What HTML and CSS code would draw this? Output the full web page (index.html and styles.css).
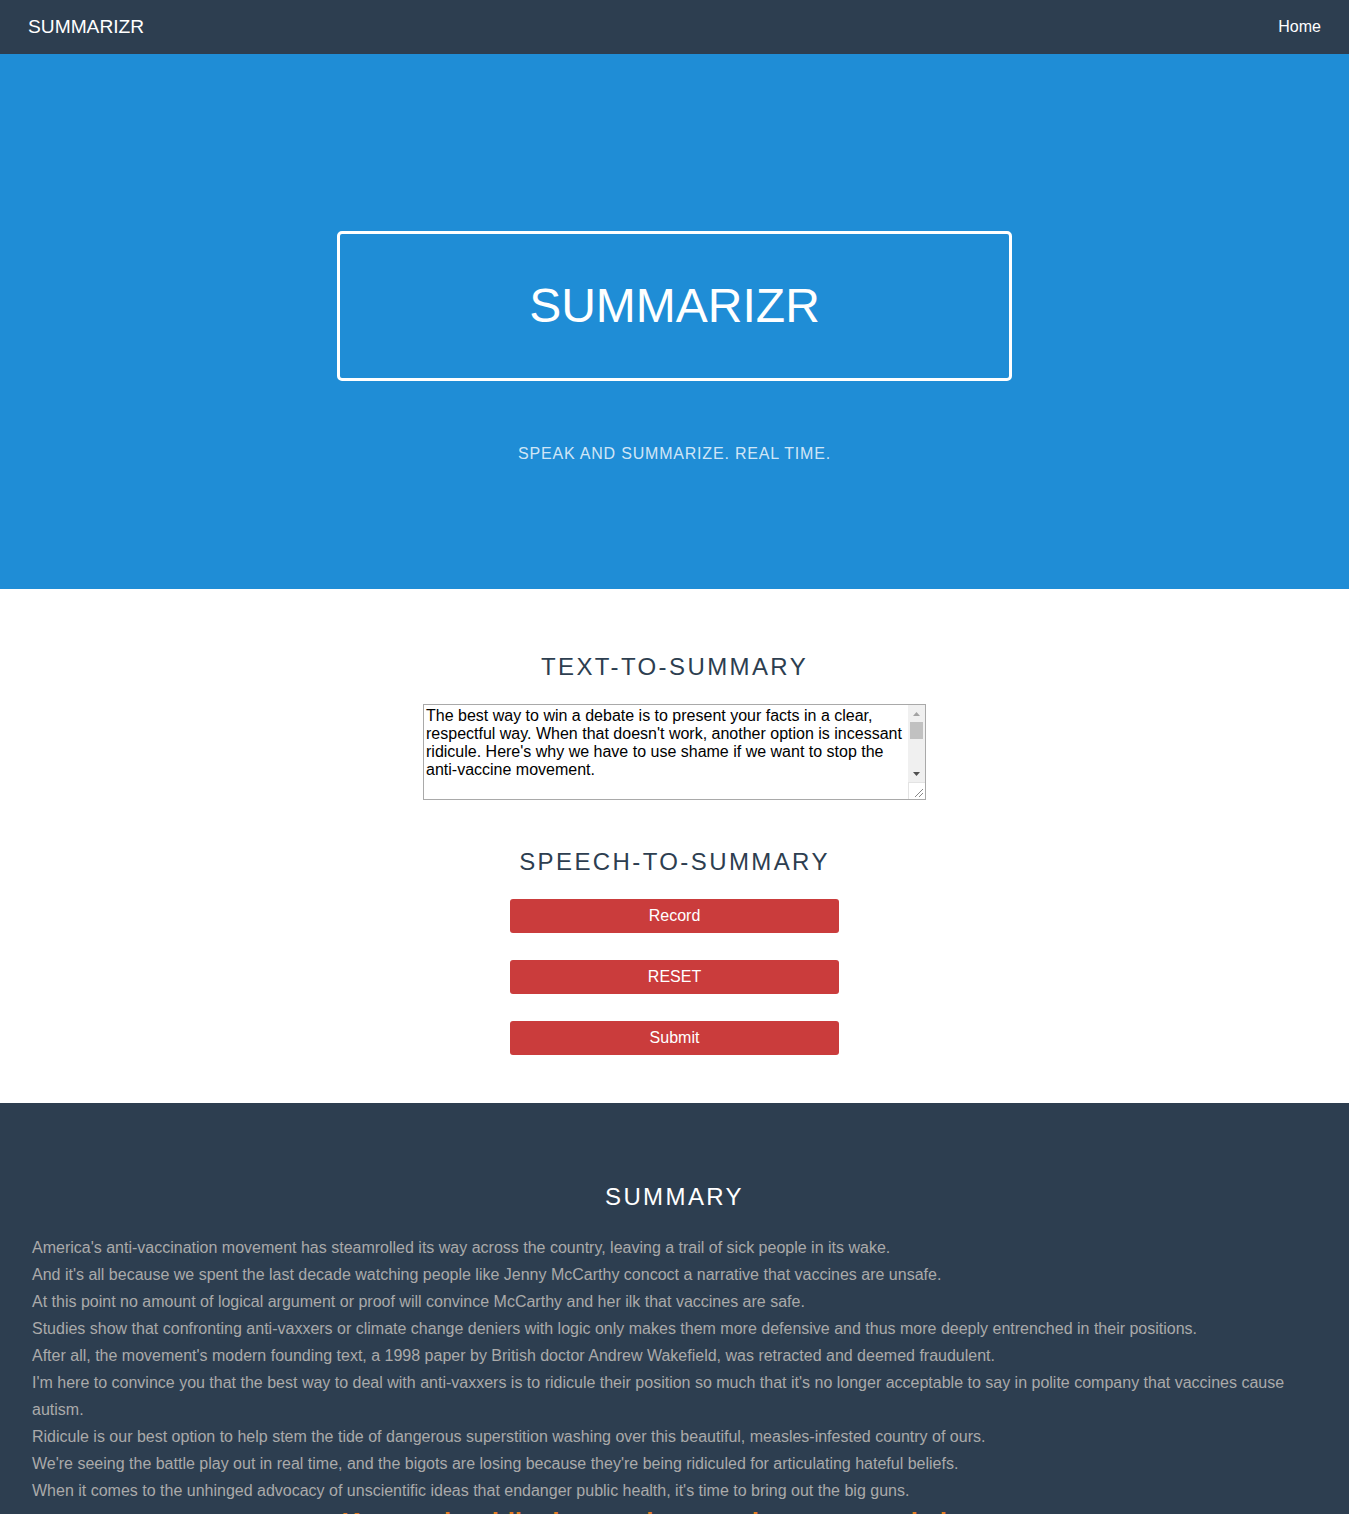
FILE: index.html
```html
<!DOCTYPE html>
<html lang="en">
<head>
<meta charset="utf-8">
<title>Summarizr</title>
<link rel="stylesheet" href="styles.css">
</head>
<body>
<header class="nav">
  <a class="brand" href="#">SUMMARIZR</a>
  <nav class="menu"><a href="#">Home</a></nav>
</header>

<section class="hero">
  <h1 class="splash-head">SUMMARIZR</h1>
  <p class="splash-sub">SPEAK AND SUMMARIZE. REAL TIME.</p>
</section>

<section class="tools">
  <h2 class="content-head">Text-to-Summary</h2>
  <div class="ta-wrap">
    <textarea class="ta">The best way to win a debate is to present your facts in a clear, respectful way. When that doesn't work, another option is incessant ridicule. Here's why we have to use shame if we want to stop the anti-vaccine movement.</textarea>
    <div class="vscroll" aria-hidden="true">
      <span class="sb-btn"><svg width="7" height="4" viewBox="0 0 7 4"><path d="M0 4L3.5 0L7 4Z" fill="#a3a3a3"/></svg></span>
      <span class="sb-track"><span class="sb-thumb"></span></span>
      <span class="sb-btn"><svg width="7" height="4" viewBox="0 0 7 4"><path d="M0 0L3.5 4L7 0Z" fill="#505050"/></svg></span>
    </div>
    <div class="sb-corner" aria-hidden="true">
      <svg width="16" height="16" viewBox="0 0 16 16"><path d="M6 14L14 6M10 14L14 10" stroke="#888" stroke-width="1"/></svg>
    </div>
  </div>
  <h2 class="content-head second">Speech-to-Summary</h2>
  <div class="buttons">
    <button class="btn" type="button">Record</button>
    <button class="btn" type="button">RESET</button>
    <button class="btn" type="button">Submit</button>
  </div>
</section>

<section class="ribbon">
  <h2 class="content-head light">Summary</h2>
  <div class="summary">
    <p>America's anti-vaccination movement has steamrolled its way across the country, leaving a trail of sick people in its wake.</p>
    <p>And it's all because we spent the last decade watching people like Jenny McCarthy concoct a narrative that vaccines are unsafe.</p>
    <p>At this point no amount of logical argument or proof will convince McCarthy and her ilk that vaccines are safe.</p>
    <p>Studies show that confronting anti-vaxxers or climate change deniers with logic only makes them more defensive and thus more deeply entrenched in their positions.</p>
    <p>After all, the movement's modern founding text, a 1998 paper by British doctor Andrew Wakefield, was retracted and deemed fraudulent.</p>
    <p>I'm here to convince you that the best way to deal with anti-vaxxers is to ridicule their position so much that it's no longer acceptable to say in polite company that vaccines cause autism.</p>
    <p>Ridicule is our best option to help stem the tide of dangerous superstition washing over this beautiful, measles-infested country of ours.</p>
    <p>We're seeing the battle play out in real time, and the bigots are losing because they're being ridiculed for articulating hateful beliefs.</p>
    <p>When it comes to the unhinged advocacy of unscientific ideas that endanger public health, it's time to bring out the big guns.</p>
  </div>
  <h3 class="keywords">Keywords: ridicule, vaccines, anti-vaxxers and shame</h3>
</section>
</body>
</html>
```
FILE: styles.css
```css
* {
  box-sizing: border-box;
}

html,
body {
  margin: 0;
  padding: 0;
}

body {
  font-family: "Liberation Sans", Arial, sans-serif;
  color: #777;
  background: #fff;
}

/* top bar */
.nav {
  height: 54px;
  background: #2d3e50;
  display: flex;
  align-items: center;
  justify-content: space-between;
  padding: 0 28px;
}

.brand {
  color: #fff;
  font-size: 19.2px;
  text-decoration: none;
}

.menu a {
  color: #fff;
  font-size: 16px;
  text-decoration: none;
}

/* splash */
.hero {
  background: #1f8dd6;
  padding: 177px 0 123px;
  display: flex;
  flex-direction: column;
  align-items: center;
}

.splash-head {
  margin: 0;
  width: 675px;
  height: 150px;
  border: 3px solid #fff;
  border-radius: 5px;
  display: flex;
  align-items: center;
  justify-content: center;
  color: #fff;
  font-size: 48px;
  font-weight: normal;
  line-height: 48px;
}

.splash-sub {
  margin: 61px 0 0;
  color: rgba(255, 255, 255, 0.8);
  font-size: 16px;
  line-height: 24px;
  letter-spacing: 0.05em;
}

/* tools */
.tools {
  padding: 63px 0 48px;
  display: flex;
  flex-direction: column;
  align-items: center;
}

.content-head {
  margin: 0;
  font-size: 24px;
  line-height: 30px;
  font-weight: normal;
  letter-spacing: 0.1em;
  text-transform: uppercase;
  color: #2d3e50;
  text-align: center;
}

.ta-wrap {
  position: relative;
  width: 503px;
  height: 96px;
  margin-top: 22px;
  border: 1px solid #a9a9a9;
  background: #fff;
}

.ta {
  display: block;
  width: 100%;
  height: 100%;
  margin: 0;
  font-family: "Liberation Sans", Arial, sans-serif;
  font-size: 16px;
  line-height: normal;
  color: #000;
  background: #fff;
  border: 0;
  padding: 2px 19px 1px 2px;
  resize: none;
  overflow: hidden;
  outline: none;
}

.vscroll {
  position: absolute;
  top: 0;
  right: 0;
  width: 17px;
  height: 77px;
  display: flex;
  flex-direction: column;
  background: #f0f0f0;
}

.sb-btn {
  height: 17px;
  flex: none;
  display: flex;
  align-items: center;
  justify-content: center;
}

.sb-track {
  flex: 1;
  display: flex;
  flex-direction: column;
}

.sb-thumb {
  height: 17px;
  margin: 0 2px;
  background: #c1c1c1;
}

.sb-corner {
  position: absolute;
  right: 0;
  bottom: 0;
  width: 17px;
  height: 17px;
  background: #fff;
  border-top: 1px solid #e3e3e3;
  border-left: 1px solid #e3e3e3;
}

.sb-corner svg {
  display: block;
}

.second {
  margin-top: 47px;
}

.buttons {
  margin-top: 22px;
  display: flex;
  flex-direction: column;
  gap: 27px;
}

.btn {
  width: 329px;
  height: 34px;
  border: 0;
  border-radius: 3px;
  background: #ca3c3c;
  color: #fff;
  font-family: "Liberation Sans", Arial, sans-serif;
  font-size: 16px;
  cursor: pointer;
}

/* summary ribbon */
.ribbon {
  background: #2d3e50;
  padding: 79px 32px 60px;
}

.ribbon .light {
  color: #fff;
}

.summary {
  margin-top: 22px;
  font-size: 16px;
  line-height: 27px;
  color: #aaa;
}

.summary p {
  margin: 0;
}

.keywords {
  margin: 3px 0 0;
  text-align: center;
  color: #e67e22;
  font-size: 26px;
  font-weight: bold;
  line-height: normal;
}
```
